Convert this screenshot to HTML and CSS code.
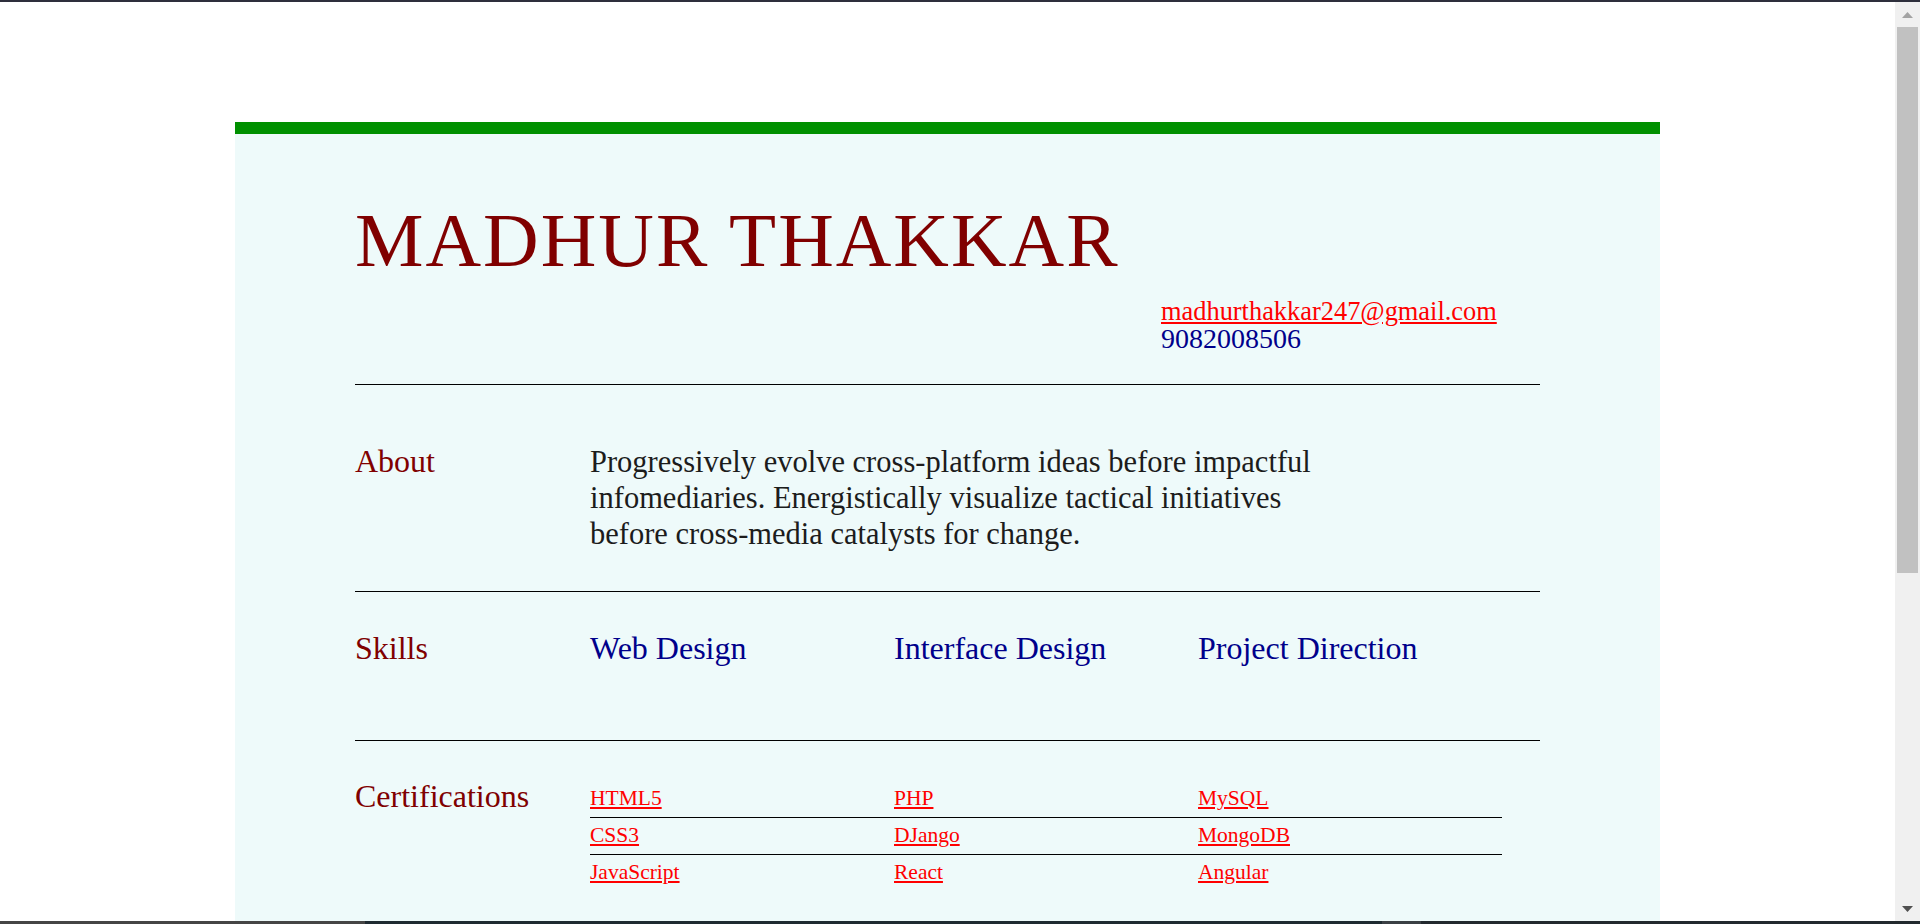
FILE: index.html
```html
<!DOCTYPE html>
<html lang="en">
<head>
<meta charset="utf-8">
<title>Madhur Thakkar - Resume</title>
<link rel="stylesheet" href="styles.css">
</head>
<body>
<div class="topbar"></div>
<main class="resume">
  <header class="head">
    <h1 class="name">MADHUR THAKKAR</h1>
    <div class="contact">
      <a class="email" href="mailto:madhurthakkar247@gmail.com">madhurthakkar247@gmail.com</a>
      <span class="phone">9082008506</span>
    </div>
  </header>

  <section class="row about">
    <h2 class="label">About</h2>
    <p class="about-text">Progressively evolve cross-platform ideas before impactful infomediaries. Energistically visualize tactical initiatives before cross-media catalysts for change.</p>
  </section>

  <section class="row skills">
    <h2 class="label">Skills</h2>
    <ul class="skill-list">
      <li>Web Design</li>
      <li>Interface Design</li>
      <li>Project Direction</li>
    </ul>
  </section>

  <section class="row certs">
    <h2 class="label">Certifications</h2>
    <div class="cert-table">
      <div class="cert-row"><a href="#">HTML5</a><a href="#">PHP</a><a href="#">MySQL</a></div>
      <div class="cert-row"><a href="#">CSS3</a><a href="#">DJango</a><a href="#">MongoDB</a></div>
      <div class="cert-row"><a href="#">JavaScript</a><a href="#">React</a><a href="#">Angular</a></div>
    </div>
  </section>
</main>

<div class="scrollbar" aria-hidden="true">
  <svg class="arrow arrow-up" width="11" height="6" viewBox="0 0 11 6"><polygon points="5.5,0 11,6 0,6" fill="#a3a3a3"/></svg>
  <div class="thumb"></div>
  <svg class="arrow arrow-down" width="11" height="6" viewBox="0 0 11 6"><polygon points="0,0 11,0 5.5,6" fill="#505050"/></svg>
</div>
<div class="taskbar"></div>
</body>
</html>
```

FILE: styles.css
```css
html, body {
  margin: 0;
  padding: 0;
  background: #ffffff;
}

body {
  padding-right: 25px;
}

.topbar {
  position: fixed;
  top: 0;
  left: 0;
  right: 0;
  height: 2px;
  background: #2e2f3c;
  z-index: 6;
}

.taskbar {
  position: fixed;
  left: 0;
  right: 0;
  bottom: 0;
  height: 3px;
  background: linear-gradient(to right, #454545 0 19%, #1f2b31 19% 72%, #3a3f44 72% 74%, #22292e 74%);
  z-index: 6;
}

/* window scrollbar of the screenshot */
.scrollbar {
  position: fixed;
  top: 0;
  right: 0;
  bottom: 0;
  width: 25px;
  background: #f0f0f0;
  z-index: 5;
}

.arrow {
  position: absolute;
  left: 7px;
  display: block;
}

.arrow-up {
  top: 12px;
}

.arrow-down {
  bottom: 12px;
}

.thumb {
  position: absolute;
  top: 27px;
  left: 2px;
  right: 2px;
  height: 546px;
  background: #c1c1c1;
}

/* resume card */
.resume {
  box-sizing: border-box;
  width: 1425px;
  min-height: 1348px;
  margin: 122px auto 0;
  padding: 68px 120px 0;
  border-top: 12px solid #009000;
  background: #eefafa;
  font-family: "Liberation Serif", "DejaVu Serif", serif;
}

.head {
  display: flex;
  flex-direction: column;
  padding-bottom: 31px;
  border-bottom: 1px solid #000;
}

.name {
  margin: 0;
  font-size: 77px;
  line-height: 77px;
  font-weight: normal;
  letter-spacing: 2px;
  color: #800000;
}

.contact {
  align-self: flex-end;
  width: 379px;
  margin-top: 18px;
  display: flex;
  flex-direction: column;
  font-size: 26.4px;
  line-height: 28px;
}

.email {
  color: #ff0000;
  text-decoration: underline;
}

.phone {
  color: #00008b;
  font-size: 28px;
}

.row {
  display: grid;
  grid-template-columns: 235px 1fr;
  border-bottom: 1px solid #000;
}

.label {
  margin: 0;
  font-size: 32px;
  line-height: 36px;
  font-weight: normal;
  color: #800000;
}

.about {
  align-items: baseline;
  padding: 58px 0 39px;
}

.about-text {
  margin: 0;
  max-width: 745px;
  font-size: 30.5px;
  line-height: 36px;
  color: #1c1c1c;
}

.skills {
  align-items: baseline;
  padding: 38px 0 74px;
}

.skill-list {
  margin: 0;
  padding: 0;
  list-style: none;
  display: grid;
  grid-template-columns: repeat(3, 304px);
  font-size: 32px;
  line-height: 36px;
  color: #00008b;
}

.certs {
  align-items: start;
  padding: 37px 0 0;
  border-bottom: none;
}

.cert-table {
  margin-top: 3px;
  width: 912px;
}

.cert-row {
  display: grid;
  grid-template-columns: repeat(3, 304px);
  padding: 5px 0 7px;
  font-size: 21.5px;
  line-height: 24px;
  border-bottom: 1px solid #000;
}

.cert-row:last-child {
  border-bottom: none;
}

.cert-row a {
  color: #ff0000;
  text-decoration: underline;
  justify-self: start;
}
```
